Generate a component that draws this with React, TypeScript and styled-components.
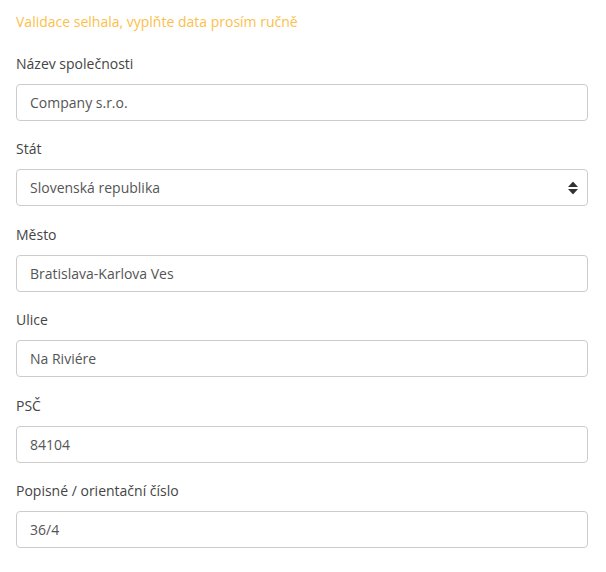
import styled, { createGlobalStyle } from 'styled-components';

const GlobalStyle = createGlobalStyle`
  body {
    margin: 0;
    background: #fff;
    font-family: "Open Sans", "Liberation Sans", sans-serif;
    font-size: 14px;
    color: #333;
  }
`

const FormWrapper = styled.form`
  padding: 12px 18px 0 16px;
`

const Warning = styled.p`
  margin: 0 0 22px;
  color: #fcc04a;
  font-size: 14px;
  line-height: 20px;
`

const Group = styled.div`
  margin-bottom: 18.45px;
`

const Label = styled.label`
  display: block;
  margin-bottom: 10px;
  font-size: 14px;
  line-height: 20px;
  color: #444;
`

const Input = styled.input`
  display: block;
  box-sizing: border-box;
  width: 100%;
  height: 37px;
  padding: 0 13px;
  border: 1px solid #ccc;
  border-radius: 4px;
  font-family: inherit;
  font-size: 14px;
  color: #555;
  background: #fff;
  outline: none;
`

const SelectBox = styled.div`
  position: relative;
`

const Select = styled.select`
  display: block;
  box-sizing: border-box;
  width: 100%;
  height: 37px;
  padding: 0 30px 0 13px;
  border: 1px solid #ccc;
  border-radius: 4px;
  font-family: inherit;
  font-size: 14px;
  color: #555;
  background: #fff;
  appearance: none;
  outline: none;
`

const Arrows = styled.svg`
  position: absolute;
  right: 10px;
  top: 50%;
  transform: translateY(-50%);
  pointer-events: none;
`

const fields = [
  { label: 'Název společnosti', value: 'Company s.r.o.' },
  { label: 'Stát', value: 'Slovenská republika', select: true },
  { label: 'Město', value: 'Bratislava-Karlova Ves' },
  { label: 'Ulice', value: 'Na Riviére' },
  { label: 'PSČ', value: '84104' },
  { label: 'Popisné / orientační číslo', value: '36/4' },
]

const App = () => {
  return (
    <>
      <GlobalStyle />
      <FormWrapper>
        <Warning>Validace selhala, vyplňte data prosím ručně</Warning>
        {fields.map((f) => (
          <Group key={f.label}>
            <Label>{f.label}</Label>
            {f.select ? (
              <SelectBox>
                <Select defaultValue={f.value}>
                  <option>{f.value}</option>
                  <option>Česká republika</option>
                </Select>
                <Arrows width="10" height="13" viewBox="0 0 10 13">
                  <path d="M5 0 L10 5.5 L0 5.5 Z" fill="#333" />
                  <path d="M0 7.5 L10 7.5 L5 13 Z" fill="#333" />
                </Arrows>
              </SelectBox>
            ) : (
              <Input defaultValue={f.value} />
            )}
          </Group>
        ))}
      </FormWrapper>
    </>
  )
}

export default App
